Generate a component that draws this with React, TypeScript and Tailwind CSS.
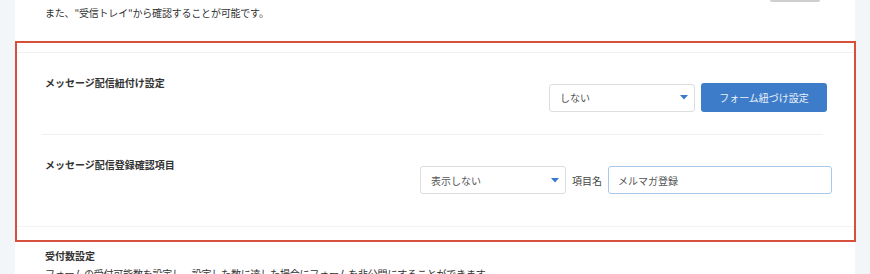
import React from "react";

function Caret() {
  return (
    <svg width="8" height="5" viewBox="0 0 8 5" className="shrink-0">
      <path d="M0 0 L8 0 L4 4.5 Z" fill="#3a78cf" />
    </svg>
  );
}

function Select({ label }: { label: string }) {
  return (
    <div className="flex items-center justify-between w-[146px] h-[28px] border border-[#dddddd] rounded-[3px] bg-white pl-[10px] pr-[6px]">
      <span className="text-[10px] text-[#555555]">{label}</span>
      <Caret />
    </div>
  );
}

export default function App() {
  return (
    <div
      className="w-[870px] h-[274px] overflow-hidden bg-[#f3f6f9] pl-[15px]"
      style={{ fontFamily: '"Noto Sans CJK JP", "Noto Sans", sans-serif' }}
    >
      <div className="w-[840px] h-full bg-white">
        <div className="h-[41px] flex flex-col">
          <div className="flex justify-end pr-[35px]">
            <div className="w-[50px] h-[2px] bg-[#cfcfcf] rounded-b-[2px]" />
          </div>
          <p className="pl-[30px] mt-[4px] text-[10px] leading-[14px] text-[#333333] tracking-[-0.2px]">
            また、"受信トレイ"から確認することが可能です。
          </p>
        </div>

        <div className="w-[841px] h-[201px] border-2 border-[#d6503b] flex flex-col">
          <div className="h-[9px]" />
          <div className="border-t border-[#f1f1f1]" />
          <div className="flex h-[81px] items-start">
            <div className="pl-[28px] pt-[23px] text-[10px] leading-[14px] font-bold text-[#333333]">
              メッセージ配信紐付け設定
            </div>
            <div className="ml-auto mr-[27px] mt-[30px] flex items-center gap-[6px]">
              <Select label="しない" />
              <button className="w-[126px] h-[29px] rounded-[3px] bg-[#3d7cc9] text-[10px] text-white/90">
                フォーム紐づけ設定
              </button>
            </div>
          </div>
          <div className="ml-[25px] w-[781px] border-t border-[#f0f0f0]" />
          <div className="flex h-[91px] items-start">
            <div className="pl-[28px] pt-[23px] text-[10px] leading-[14px] font-bold text-[#333333]">
              メッセージ配信登録確認項目
            </div>
            <div className="ml-auto mr-[22px] mt-[31px] flex items-center">
              <Select label="表示しない" />
              <span className="ml-[6px] text-[10px] text-[#444444]">項目名</span>
              <div className="ml-[6px] w-[224px] h-[28px] border border-[#a9c8ec] rounded-[3px] flex items-center pl-[9px] text-[10px] text-[#555555]">
                メルマガ登録
              </div>
            </div>
          </div>
          <div className="border-t border-[#f3f3f3]" />
        </div>

        <div className="pl-[30px] pt-[7px]">
          <div className="text-[10px] leading-[14px] font-bold text-[#333333]">受付数設定</div>
          <p className="mt-[4px] text-[10px] leading-[14px] text-[#333333] tracking-[-0.2px]">
            フォームの受付可能数を設定し、設定した数に達した場合にフォームを非公開にすることができます。
          </p>
        </div>
      </div>
    </div>
  );
}
